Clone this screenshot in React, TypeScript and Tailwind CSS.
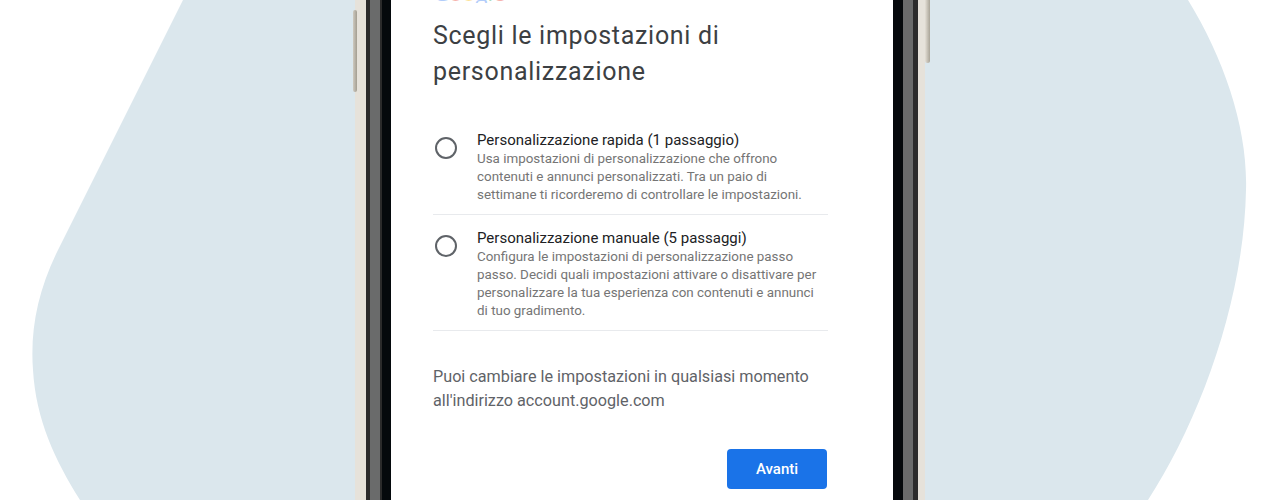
import React from "react";

function Radio() {
  return (
    <div className="mt-[7px] h-[22px] w-[22px] shrink-0 rounded-full border-2 border-[#5f6368]" />
  );
}

function Option({ title, lines }: { title: string; lines: string }) {
  return (
    <div className="flex border-b border-[#e8eaed] pb-[10px]">
      <div className="ml-[2px]">
        <Radio />
      </div>
      <div className="ml-[20px] flex w-[350px] flex-col">
        <div className="text-[15px] leading-[20px] text-[#202124]">{title}</div>
        <div className="text-[13.4px] leading-[18px] text-[#757575]">{lines}</div>
      </div>
    </div>
  );
}

export default function App() {
  return (
    <div
      className="relative h-[500px] w-[1280px] overflow-hidden bg-white"
      style={{ fontFamily: "Roboto, 'Noto Sans', sans-serif" }}
    >
      <svg className="absolute inset-0" width="1280" height="500" viewBox="0 0 1280 500">
        <path
          d="M183,0 L1188,0 C1225,60 1248,130 1246,190 C1244,300 1200,420 1148,500 L80,500 C55,460 36,420 33,370 C30,330 38,290 58,250 Z"
          fill="#dbe7ed"
        />
      </svg>

      <div className="relative flex h-full">
        <div className="relative ml-[355px] flex h-full w-[570px]">
          {/* side buttons */}
          <div className="absolute left-[-2px] top-[10px] h-[82px] w-[4px] rounded-sm bg-gradient-to-r from-[#cfcac0] to-[#a39e92]" />
          <div className="absolute right-[-5px] top-[-5px] h-[68px] w-[5px] rounded-sm bg-gradient-to-r from-[#e4dfd6] to-[#a9a497]" />

          <div className="flex h-full w-full border-l-[11px] border-r-[7px] border-[#e6e2da]">
            <div className="flex h-full w-full border-l-4 border-r-[5px] border-[#2b2b2b]">
              <div className="flex h-full w-full border-x-[10px] border-[#6a6b6b]">
                <div className="flex h-full w-full border-l-2 border-[#2b2b2b]">
                  <div className="flex h-full w-full border-l-[9px] border-r-[10px] border-[#05090c]">
                    <div className="h-full w-full bg-white pl-[42px]">
                      <div className="flex w-[395px] flex-col">
                        <div className="relative h-[3px] overflow-hidden">
                          <div
                            className="absolute bottom-0 left-0 text-[22px] leading-[22px] opacity-40"
                            style={{ fontFamily: "'Open Sans', sans-serif" }}
                          >
                            <span className="text-[#4285f4]">G</span>
                            <span className="text-[#ea4335]">o</span>
                            <span className="text-[#fbbc05]">o</span>
                            <span className="text-[#4285f4]">g</span>
                            <span className="text-[#34a853]">l</span>
                            <span className="text-[#ea4335]">e</span>
                          </div>
                        </div>
                        <h1 className="mt-[15px] text-[25px] font-normal leading-[36px] tracking-[0.7px] text-[#3c4043]">
                          Scegli le impostazioni di
                          <br />
                          personalizzazione
                        </h1>
                        <div className="mt-[40px]">
                          <Option
                            title="Personalizzazione rapida (1 passaggio)"
                            lines={
                              "Usa impostazioni di personalizzazione che offrono contenuti e annunci personalizzati. Tra un paio di settimane ti ricorderemo di controllare le impostazioni."
                            }
                          />
                        </div>
                        <div className="mt-[13px]">
                          <Option
                            title="Personalizzazione manuale (5 passaggi)"
                            lines={
                              "Configura le impostazioni di personalizzazione passo passo. Decidi quali impostazioni attivare o disattivare per personalizzare la tua esperienza con contenuti e annunci di tuo gradimento."
                            }
                          />
                        </div>
                        <p className="mt-[34px] text-[16.2px] leading-[24px] text-[#5f6368]">
                          Puoi cambiare le impostazioni in qualsiasi momento
                          <br />
                          all'indirizzo account.google.com
                        </p>
                        <div className="mt-[36px] flex justify-end">
                          <button className="mr-[1px] h-[40px] w-[100px] rounded-[4px] bg-[#1a73e8] text-[15px] font-medium text-white">
                            Avanti
                          </button>
                        </div>
                      </div>
                    </div>
                  </div>
                </div>
              </div>
            </div>
          </div>
        </div>
      </div>
    </div>
  );
}
